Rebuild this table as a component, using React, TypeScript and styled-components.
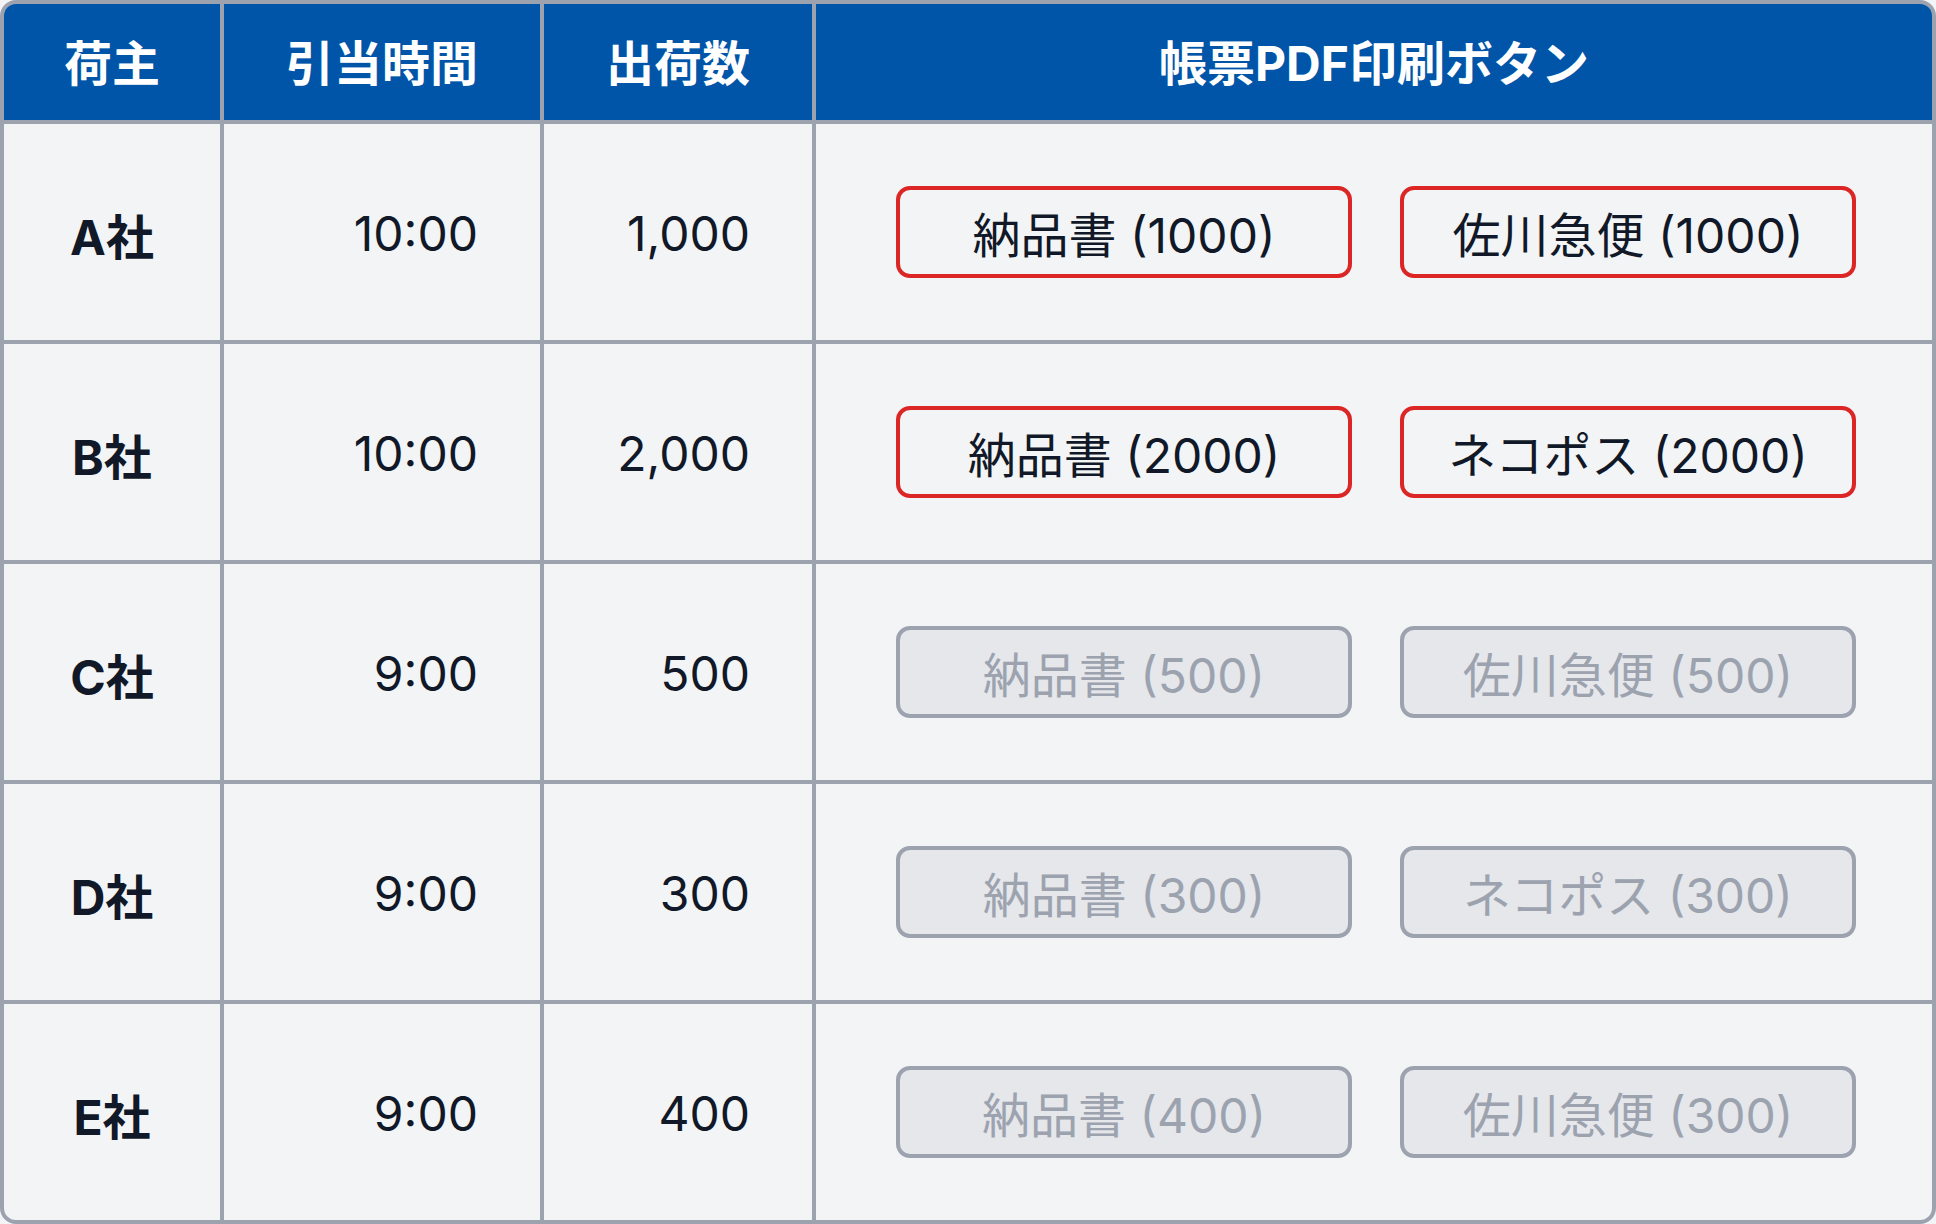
import React from 'react';
import styled, { createGlobalStyle } from 'styled-components';

const GlobalStyle = createGlobalStyle`
  html, body {
    margin: 0;
    padding: 0;
    background: #f3f4f6;
  }
  body {
    font-family: Inter, 'Noto Sans CJK JP', sans-serif;
    color: #111827;
  }
`;

type Shipment = {
  shipper: string;
  time: string;
  count: string;
  slips: { label: string; enabled: boolean }[];
};

const rows: Shipment[] = [
  {
    shipper: 'A社',
    time: '10:00',
    count: '1,000',
    slips: [
      { label: '納品書 (1000)', enabled: true },
      { label: '佐川急便 (1000)', enabled: true },
    ],
  },
  {
    shipper: 'B社',
    time: '10:00',
    count: '2,000',
    slips: [
      { label: '納品書 (2000)', enabled: true },
      { label: 'ネコポス (2000)', enabled: true },
    ],
  },
  {
    shipper: 'C社',
    time: '9:00',
    count: '500',
    slips: [
      { label: '納品書 (500)', enabled: false },
      { label: '佐川急便 (500)', enabled: false },
    ],
  },
  {
    shipper: 'D社',
    time: '9:00',
    count: '300',
    slips: [
      { label: '納品書 (300)', enabled: false },
      { label: 'ネコポス (300)', enabled: false },
    ],
  },
  {
    shipper: 'E社',
    time: '9:00',
    count: '400',
    slips: [
      { label: '納品書 (400)', enabled: false },
      { label: '佐川急便 (300)', enabled: false },
    ],
  },
];

const App = (): JSX.Element => {
  return (
    <>
      <GlobalStyle />
      <TableFrame>
        <HeaderCell>荷主</HeaderCell>
        <HeaderCell>引当時間</HeaderCell>
        <HeaderCell>出荷数</HeaderCell>
        <HeaderCell>帳票PDF印刷ボタン</HeaderCell>

        {rows.map((row) => (
          <React.Fragment key={row.shipper}>
            <BodyCell $align="center" $bold>
              {row.shipper}
            </BodyCell>
            <BodyCell $align="right">{row.time}</BodyCell>
            <BodyCell $align="right">{row.count}</BodyCell>
            <ButtonCell>
              {row.slips.map((slip) => (
                <PrintButton key={slip.label} $enabled={slip.enabled} disabled={!slip.enabled}>
                  {slip.label}
                </PrintButton>
              ))}
            </ButtonCell>
          </React.Fragment>
        ))}
      </TableFrame>
    </>
  );
};

export default App;

const TableFrame = styled.div`
  box-sizing: border-box;
  width: 1936px;
  height: 1224px;
  border: 4px solid #9ca3af;
  border-radius: 16px;
  overflow: hidden;
  background: #9ca3af;
  display: grid;
  grid-template-columns: 216px 316px 268px 1116px;
  grid-template-rows: 116px repeat(5, 216px);
  gap: 4px;
`;

const HeaderCell = styled.div`
  display: flex;
  align-items: center;
  justify-content: center;
  padding-bottom: 4px;
  background: #0055a8;
  color: #ffffff;
  font-size: 48px;
  font-weight: 700;
  white-space: nowrap;
`;

const BodyCell = styled.div<{ $align: 'center' | 'right'; $bold?: boolean }>`
  display: flex;
  align-items: center;
  justify-content: ${(p) => (p.$align === 'right' ? 'flex-end' : 'center')};
  padding-top: 3px;
  padding-right: ${(p) => (p.$align === 'right' ? '62px' : '0')};
  background: #f3f4f6;
  font-size: 48px;
  font-weight: ${(p) => (p.$bold ? 700 : 400)};
  white-space: nowrap;
`;

const ButtonCell = styled.div`
  display: flex;
  align-items: center;
  justify-content: flex-start;
  gap: 48px;
  padding-left: 80px;
  background: #f3f4f6;
`;

const PrintButton = styled.button<{ $enabled: boolean }>`
  box-sizing: border-box;
  width: 456px;
  height: 92px;
  border-radius: 14px;
  border: 4px solid ${(p) => (p.$enabled ? '#dc2626' : '#9ca3af')};
  background: ${(p) => (p.$enabled ? 'transparent' : '#e5e7eb')};
  color: ${(p) => (p.$enabled ? '#111827' : '#9ca3af')};
  font-family: Inter, 'Noto Sans CJK JP', sans-serif;
  font-size: 48px;
  font-weight: 400;
  white-space: nowrap;
  padding: 0;
  cursor: ${(p) => (p.$enabled ? 'pointer' : 'default')};
`;
